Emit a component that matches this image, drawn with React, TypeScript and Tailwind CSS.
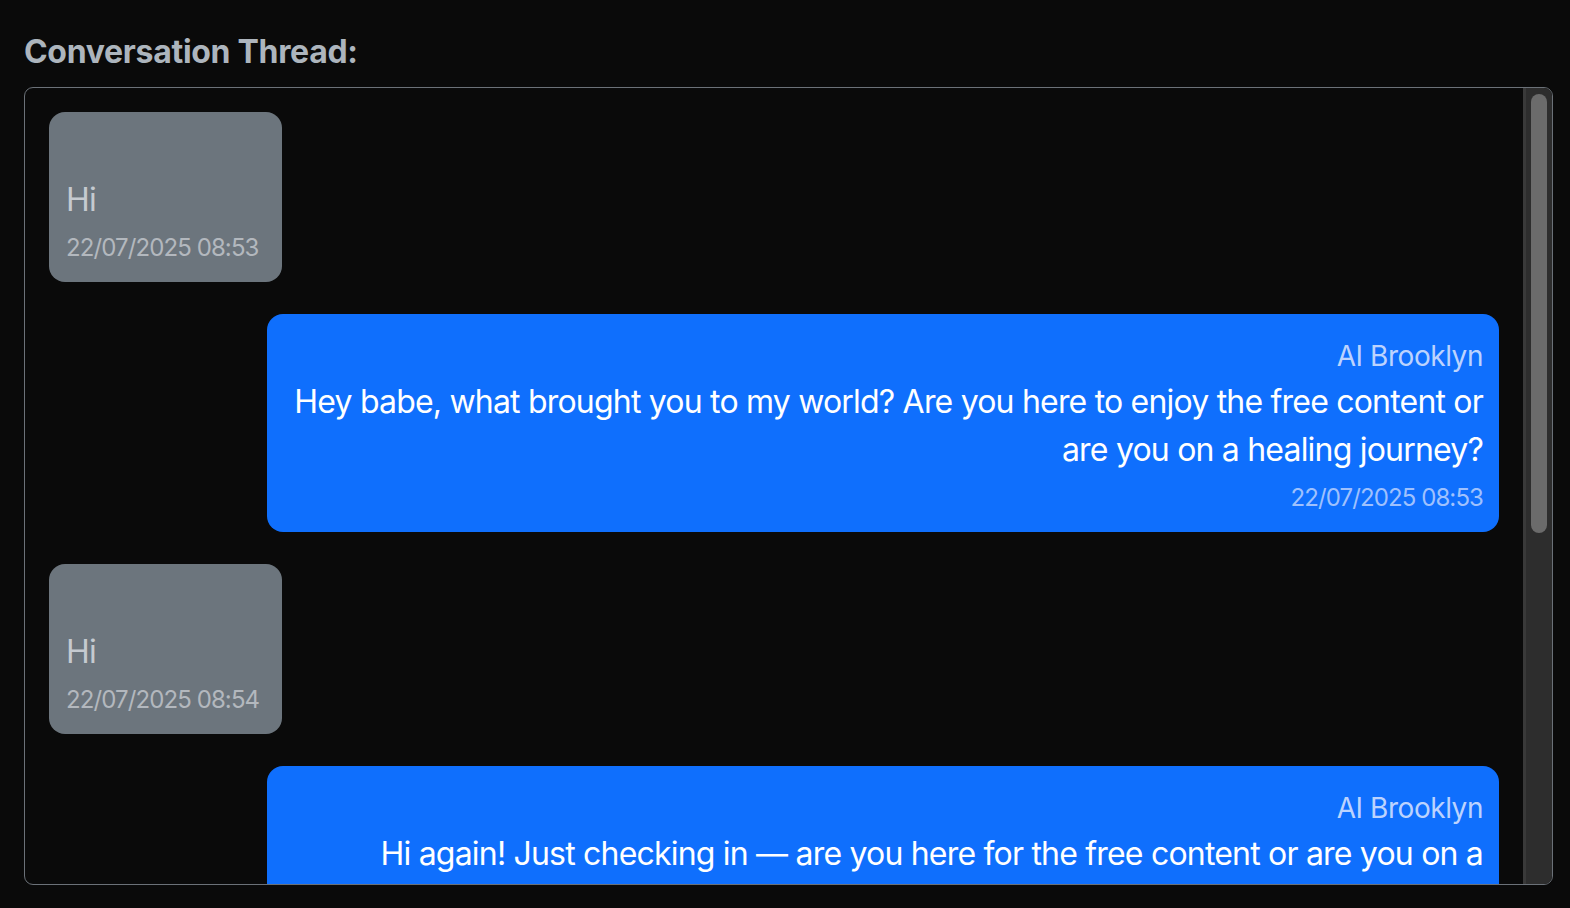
const messages = [
  { from: "user", text: "Hi", time: "22/07/2025 08:53" },
  {
    from: "ai",
    name: "AI Brooklyn",
    text: "Hey babe, what brought you to my world? Are you here to enjoy the free content or are you on a healing journey?",
    time: "22/07/2025 08:53",
  },
  { from: "user", text: "Hi", time: "22/07/2025 08:54" },
  {
    from: "ai",
    name: "AI Brooklyn",
    text: "Hi again! Just checking in — are you here for the free content or are you on a healing journey?",
    time: "22/07/2025 08:54",
  },
];

function Bubble({ m }: { m: (typeof messages)[number] }) {
  if (m.from === "user") {
    return (
      <div className="flex justify-start mb-8">
        <div className="bg-[#6c757d] rounded-[16px] pt-5 pb-4 px-[17px] min-w-[233px]">
          <div className="h-[44px]" />
          <div className="text-[32px] leading-[48px] tracking-[-0.8px] text-[#c5cad0]">{m.text}</div>
          <div className="mt-[6px] text-[24px] leading-[36px] tracking-[-0.9px] text-[#b3b8be]">{m.time}</div>
        </div>
      </div>
    );
  }
  return (
    <div className="flex justify-end mb-8">
      <div className="bg-[#0f6ffd] rounded-[16px] pt-5 pb-4 px-4 max-w-[85%] text-right">
        <div className="text-[28px] leading-[44px] tracking-[-0.45px] text-[#bcd3fe]">{m.name}</div>
        <div className="text-[32px] leading-[48px] tracking-[-0.8px] text-white">{m.text}</div>
        <div className="mt-[6px] text-[24px] leading-[36px] tracking-[-0.9px] text-[#9fc1fd]">{m.time}</div>
      </div>
    </div>
  );
}

export default function App() {
  return (
    <div className="w-[1570px] h-[908px] bg-[#0a0a0a] pt-[33px] px-6 font-['Inter','Noto_Sans',sans-serif] overflow-hidden">
      <h2 className="text-[32px] leading-[38px] font-bold tracking-[-0.3px] text-[#adb5bd] mb-4">Conversation Thread:</h2>
      <div className="h-[798px] w-[1529px] border border-[#6b7178] rounded-[9px] flex overflow-hidden">
        <div className="flex-1 p-6 overflow-hidden">
          {messages.map((m, i) => (
            <Bubble key={i} m={m} />
          ))}
        </div>
        <div className="w-[29px] bg-[#2d2d2d] border-l-[3px] border-[#393939] px-[5px] pt-[6px]">
          <div className="h-[439px] bg-[#6b6b6b] rounded-full" />
        </div>
      </div>
    </div>
  );
}
